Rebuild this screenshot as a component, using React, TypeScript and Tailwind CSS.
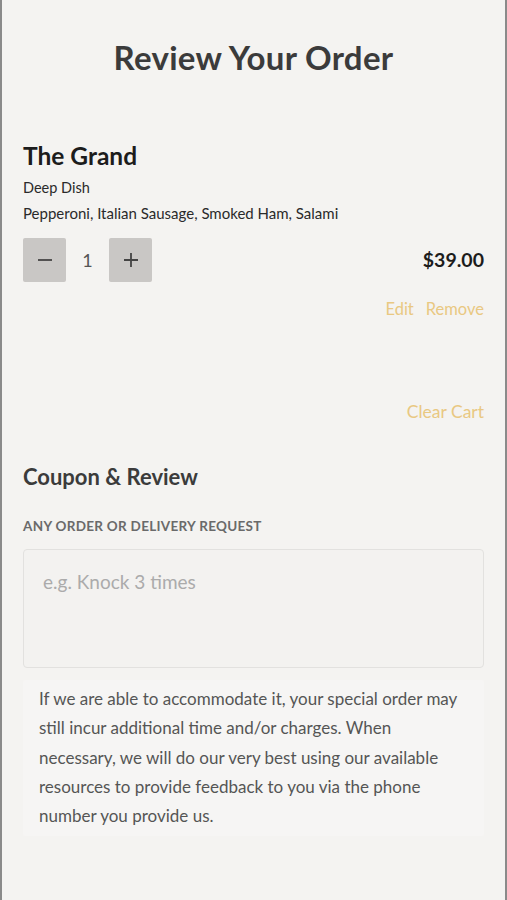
import React from "react";

export default function App() {
  return (
    <div
      className="min-h-[900px] w-full bg-[#f4f3f1] border-l-2 border-r-2 border-l-[#8a8a8a] border-r-[#8a8a8a] text-[#3a3a3a]"
      style={{ fontFamily: "Lato, 'Open Sans', sans-serif" }}
    >
      <div className="px-[21px]">
        <h1 className="pt-[36px] text-center text-[33px] font-bold leading-[42px] text-[#3b3b3b] tracking-[0.3px]">
          Review Your Order
        </h1>

        <div className="mt-[63px]">
          <div className="text-[24.5px] font-bold leading-[30px] text-[#1c1c1c]">The Grand</div>
          <div className="mt-[8px] text-[14.5px] leading-[18px] text-[#2a2a2a]">Deep Dish</div>
          <div className="mt-[7px] text-[15px] leading-[18px] text-[#2a2a2a]">
            Pepperoni, Italian Sausage, Smoked Ham, Salami
          </div>
          <div className="mt-[16px] flex items-center">
            <button className="flex h-[44px] w-[43px] items-center justify-center rounded-[2px] bg-[#c9c7c5]">
              <svg width="16" height="16" viewBox="0 0 16 16">
                <path d="M1 8h14" stroke="#444" strokeWidth="1.8" />
              </svg>
            </button>
            <span className="w-[43px] text-center text-[18px] text-[#555]">1</span>
            <button className="flex h-[44px] w-[43px] items-center justify-center rounded-[2px] bg-[#c9c7c5]">
              <svg width="16" height="16" viewBox="0 0 16 16">
                <path d="M1 8h14M8 1v14" stroke="#444" strokeWidth="1.8" />
              </svg>
            </button>
            <span className="ml-auto text-[19.5px] font-bold text-[#1c1c1c]">$39.00</span>
          </div>
          <div className="mt-[17px] flex justify-end gap-[12px] text-[16.5px] leading-[20px] text-[#e9c882]">
            <span>Edit</span>
            <span>Remove</span>
          </div>
        </div>

        <div className="mt-[83px] flex justify-end text-[17.5px] leading-[20px] text-[#e9c882]">
          <span>Clear Cart</span>
        </div>

        <div className="mt-[42px] text-[22px] font-bold leading-[26px] text-[#3b3b3b]">Coupon &amp; Review</div>
        <div className="mt-[28px] text-[13.5px] font-bold uppercase leading-[16px] tracking-[0.3px] text-[#6a6a6a]">
          Any order or delivery request
        </div>
        <textarea
          className="mt-[15px] block h-[119px] w-full resize-none rounded-[4px] border border-[#e2e1df] bg-[#f3f2f0] px-[19px] py-[20px] text-[19px] leading-[24px] text-[#555] placeholder:text-[#ababab] outline-none"
          placeholder="e.g. Knock 3 times"
        />
        <div className="mt-[12px] rounded-[2px] bg-[#f6f5f4] px-[16px] pt-[4px] pb-[6px] text-[17px] leading-[29.3px] text-[#555]">
          If we are able to accommodate it, your special order may still incur additional time and/or charges. When
          necessary, we will do our very best using our available resources to provide feedback to you via the phone
          number you provide us.
        </div>
      </div>
    </div>
  );
}
